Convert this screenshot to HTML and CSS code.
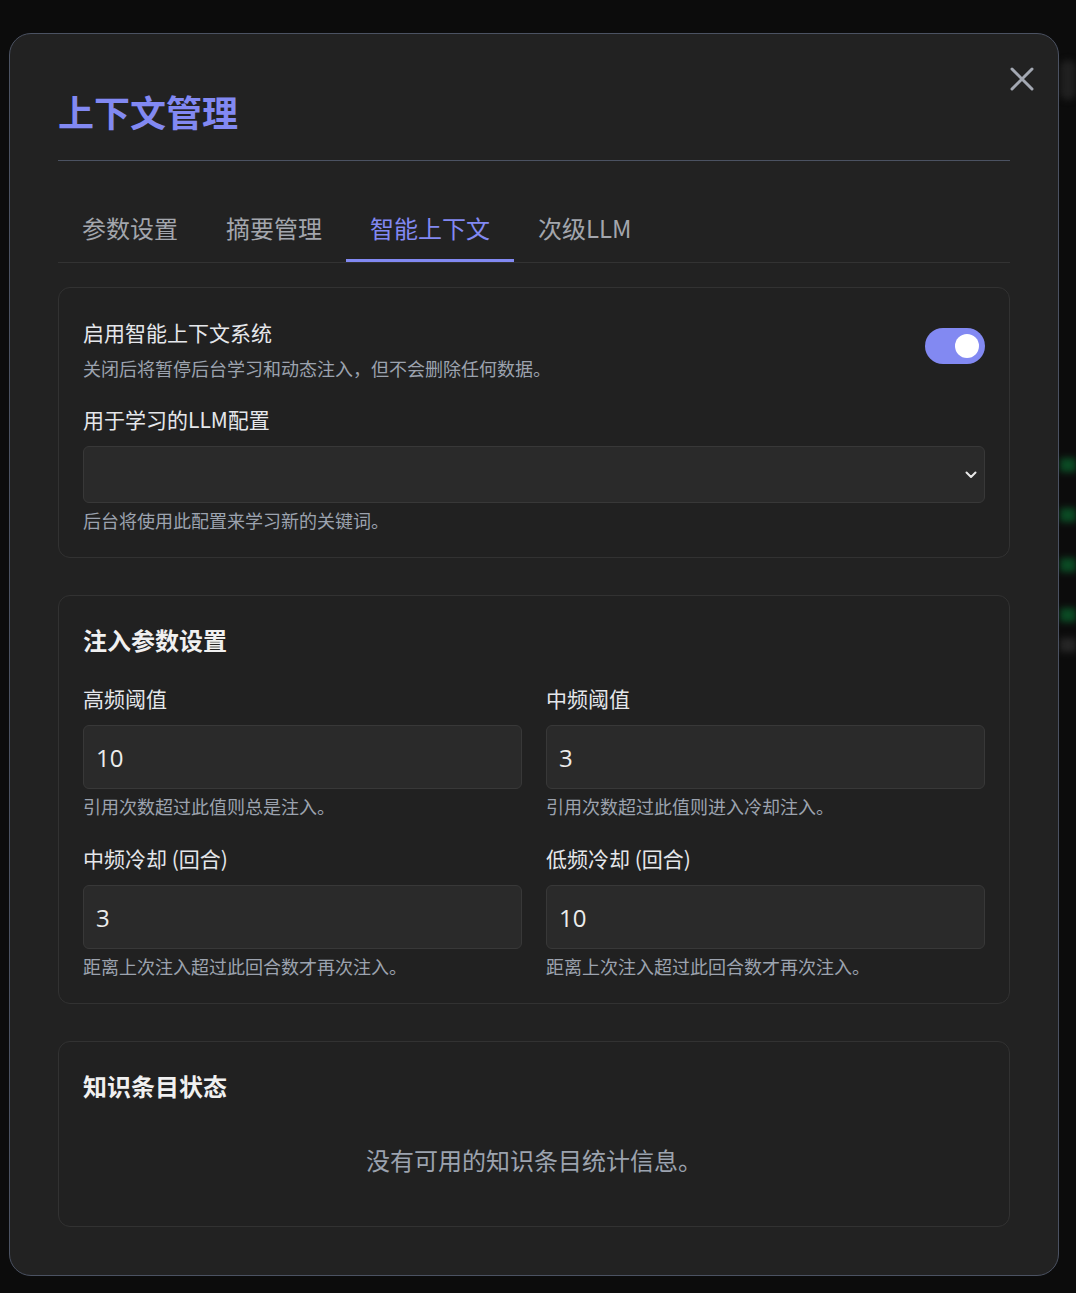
FILE: index.html
```html
<!DOCTYPE html>
<html lang="zh-CN">
<head>
    <meta charset="UTF-8">
    <meta name="viewport" content="width=device-width, initial-scale=1.0">
    <title>上下文管理</title>
    <link rel="stylesheet" href="styles.css">
</head>
<body>
    <div class="page">
        <div class="page-main"></div>
        <div class="page-side">
            <div class="side-pill"></div>
            <div class="side-blob"></div>
            <div class="side-bar green"></div>
            <div class="side-bar green"></div>
            <div class="side-bar green"></div>
            <div class="side-bar green"></div>
            <div class="side-bar grey"></div>
        </div>
    </div>

    <div class="overlay">
        <div class="modal">
            <button class="close-btn" aria-label="关闭">
                <svg width="24" height="24" viewBox="0 0 24 24">
                    <path d="M2 2 L22 22 M22 2 L2 22" stroke="#a3a8b2" stroke-width="3" stroke-linecap="round"/>
                </svg>
            </button>

            <div class="modal-header">
                <h2>上下文管理</h2>
            </div>

            <div class="tabs">
                <button class="tab">参数设置</button>
                <button class="tab">摘要管理</button>
                <button class="tab active">智能上下文</button>
                <button class="tab">次级LLM</button>
            </div>

            <div class="card">
                <div class="switch-row">
                    <div>
                        <div class="label">启用智能上下文系统</div>
                        <div class="hint">关闭后将暂停后台学习和动态注入，但不会删除任何数据。</div>
                    </div>
                    <label class="switch">
                        <input type="checkbox" checked>
                        <span class="slider"></span>
                    </label>
                </div>

                <div class="field field-llm">
                    <div class="label">用于学习的LLM配置</div>
                    <div class="select-wrap">
                        <select class="control select"></select>
                        <svg class="chevron" width="12" height="8" viewBox="0 0 12 8">
                            <path d="M1.5 1.5 L6 6 L10.5 1.5" fill="none" stroke="#e8e8e8" stroke-width="2" stroke-linecap="round" stroke-linejoin="round"/>
                        </svg>
                    </div>
                    <div class="hint">后台将使用此配置来学习新的关键词。</div>
                </div>
            </div>

            <div class="card">
                <h3>注入参数设置</h3>
                <div class="grid">
                    <div class="field">
                        <div class="label">高频阈值</div>
                        <input class="control" type="text" value="10">
                        <div class="hint">引用次数超过此值则总是注入。</div>
                    </div>
                    <div class="field">
                        <div class="label">中频阈值</div>
                        <input class="control" type="text" value="3">
                        <div class="hint">引用次数超过此值则进入冷却注入。</div>
                    </div>
                    <div class="field">
                        <div class="label">中频冷却 (回合)</div>
                        <input class="control" type="text" value="3">
                        <div class="hint">距离上次注入超过此回合数才再次注入。</div>
                    </div>
                    <div class="field">
                        <div class="label">低频冷却 (回合)</div>
                        <input class="control" type="text" value="10">
                        <div class="hint">距离上次注入超过此回合数才再次注入。</div>
                    </div>
                </div>
            </div>

            <div class="card">
                <h3>知识条目状态</h3>
                <p class="empty">没有可用的知识条目统计信息。</p>
            </div>
        </div>
    </div>
</body>
</html>
```

FILE: styles.css
```css
body, html {
    margin: 0;
    padding: 0;
    height: 100%;
    overflow: hidden;
    background-color: #0c0c0c;
    font-family: "Noto Sans CJK SC", "Noto Sans", sans-serif;
}
.page {
    display: flex;
    height: 100vh;
}
.page-main {
    flex: 1;
}
.page-side {
    width: 16px;
    display: flex;
    flex-direction: column;
    filter: blur(3px);
}
.side-pill {
    height: 8px;
}
.side-blob {
    height: 40px;
    margin-top: 52px;
    background: #202020;
    border-radius: 20px;
}
.side-bar {
    height: 14px;
    margin-top: 36px;
}
.side-blob + .side-bar {
    margin-top: 358px;
}
.side-bar.green {
    background: #0b4a24;
}
.side-bar.grey {
    background: #262626;
    margin-top: 16px;
}

.overlay {
    position: fixed;
    inset: 0;
    padding: 33px 0 0 9px;
}
.modal {
    position: relative;
    box-sizing: border-box;
    width: 1050px;
    padding: 48px;
    background: #222222;
    border: 1px solid #4b5262;
    border-radius: 22px;
    color: #e6e6e6;
}
.close-btn {
    position: absolute;
    top: 33px;
    right: 24px;
    width: 24px;
    height: 24px;
    padding: 0;
    border: none;
    background: none;
    cursor: pointer;
}
.modal-header {
    padding-bottom: 20px;
    border-bottom: 1px solid #4b5262;
}
.modal-header h2 {
    margin: 0;
    font-size: 36px;
    line-height: 58px;
    font-weight: 700;
    color: #8289f2;
}

.tabs {
    display: flex;
    margin-top: 37px;
    margin-bottom: 24px;
    border-bottom: 1px solid #333333;
}
.tab {
    padding: 14px 24px 15px;
    font-family: inherit;
    font-size: 24px;
    line-height: 32px;
    color: #a3a6ad;
    background: none;
    border: none;
    border-bottom: 3px solid transparent;
    cursor: pointer;
}
.tab.active {
    color: #8289f2;
    border-bottom-color: #8289f2;
}

.card {
    padding: 24px;
    border: 1px solid #323232;
    border-radius: 12px;
    background: #212121;
}
.card + .card {
    margin-top: 37px;
}
.card h3 {
    margin: 0;
    font-size: 24px;
    line-height: 40px;
    font-weight: 700;
    color: #f0f0f0;
}

.label {
    font-size: 21px;
    line-height: 30px;
    color: #e5e7eb;
}
.hint {
    margin-top: 4px;
    font-size: 18px;
    line-height: 26px;
    color: #9ca3af;
}
.switch-row {
    display: flex;
    align-items: flex-start;
    justify-content: space-between;
    padding-top: 5px;
}
.switch-row .hint {
    margin-top: 8px;
}
.switch {
    position: relative;
    width: 60px;
    height: 36px;
    margin-top: 11px;
    flex-shrink: 0;
}
.switch input {
    display: none;
}
.slider {
    position: absolute;
    inset: 0;
    background: #8289f2;
    border-radius: 18px;
}
.slider::after {
    content: "";
    position: absolute;
    top: 6px;
    right: 6px;
    width: 24px;
    height: 24px;
    border-radius: 50%;
    background: #ffffff;
}

.field-llm {
    margin-top: 23px;
}
.field .label {
    margin-bottom: 12px;
}
.control {
    display: block;
    box-sizing: border-box;
    width: 100%;
    height: 64px;
    padding: 0 12px;
    font-family: "Open Sans", "Noto Sans CJK SC", sans-serif;
    font-size: 24px;
    color: #ececec;
    background: #2a2a2a;
    border: 1px solid #383838;
    border-radius: 6px;
    outline: none;
}
.select-wrap {
    position: relative;
}
.select {
    height: 57px;
    appearance: none;
}
.chevron {
    position: absolute;
    right: 8px;
    top: 25px;
    pointer-events: none;
}

.grid {
    display: grid;
    grid-template-columns: 1fr 1fr;
    column-gap: 24px;
    row-gap: 24px;
    margin-top: 23px;
}

.empty {
    margin: 0;
    padding: 32px 0 20px;
    text-align: center;
    font-size: 24px;
    line-height: 44px;
    color: #9ca3af;
}
```
